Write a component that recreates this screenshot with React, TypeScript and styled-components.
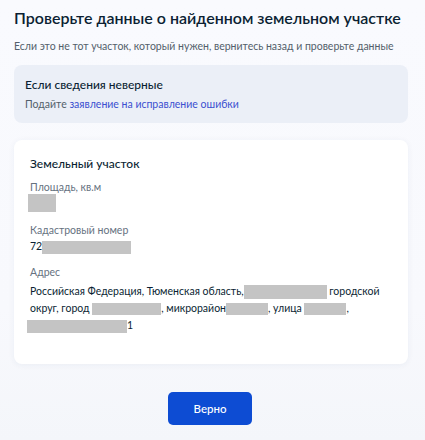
import React from "react";
import styled, { createGlobalStyle } from "styled-components";

const Global = createGlobalStyle`
  html, body { margin: 0; padding: 0; }
  body {
    background: linear-gradient(180deg, #f9fafe 0%, #f8f9fd 70%, #f4f6fa 100%);
    min-height: 440px;
    font-family: Lato, "Open Sans", sans-serif;
    color: #0b1f33;
  }
`;

const Page = styled.div`
  padding: 6px 17px 0 14px;
  display: flex;
  flex-direction: column;
`;

const Title = styled.h1`
  margin: 0;
  font-size: 16px;
  line-height: 24px;
  font-weight: 600;
  color: #0b1f33;
  white-space: nowrap;
`;

const Subtitle = styled.p`
  margin: 8px 0 0;
  font-size: 10.5px;
  line-height: 16px;
  color: #535f6b;
`;

const Alert = styled.div`
  margin-top: 11px;
  background: #ebeff7;
  border-radius: 8px;
  padding: 12px 11px 11px;
  display: flex;
  flex-direction: column;
  gap: 3px;
`;

const AlertTitle = styled.div`
  font-size: 12px;
  line-height: 16px;
  font-weight: 500;
  color: #0b1f33;
`;

const AlertText = styled.div`
  font-size: 10.5px;
  line-height: 16px;
  color: #535f6b;
`;

const Link = styled.a`
  color: #3b4fd0;
  text-decoration: none;
`;

const Card = styled.div`
  margin-top: 17px;
  background: #fff;
  border-radius: 8px;
  box-shadow: 0 1px 6px rgba(40, 60, 120, 0.06);
  padding: 16px 16px 30px 16px;
  display: flex;
  flex-direction: column;
`;

const CardTitle = styled.div`
  font-size: 12px;
  line-height: 16px;
  font-weight: 500;
  color: #0b1f33;
  margin-bottom: 8px;
`;

const Field = styled.div<{ $gap?: number }>`
  display: flex;
  flex-direction: column;
  gap: ${(p) => p.$gap ?? 0}px;
  & + & {
    margin-top: 11px;
  }
`;

const Label = styled.div`
  font-size: 10.5px;
  line-height: 14px;
  color: #66727f;
`;

const Value = styled.div<{ $lh?: number }>`
  font-size: 10.5px;
  line-height: ${(p) => p.$lh ?? 16}px;
  color: #0b1f33;
`;

const Redacted = styled.span<{ $w: number; $h?: number; $ml?: number }>`
  display: inline-block;
  width: ${(p) => p.$w}px;
  height: ${(p) => p.$h ?? 14}px;
  margin-left: ${(p) => p.$ml ?? 0}px;
  background: #c4c4c4;
  vertical-align: middle;
`;

const BlockRedacted = styled.div<{ $w: number; $h: number; $ml?: number }>`
  width: ${(p) => p.$w}px;
  height: ${(p) => p.$h}px;
  margin-left: ${(p) => p.$ml ?? 0}px;
  background: #c4c4c4;
`;

const ButtonRow = styled.div`
  display: flex;
  justify-content: center;
  margin-top: 28px;
  padding-right: 2px;
`;

const Button = styled.button`
  width: 84px;
  height: 33px;
  border: none;
  border-radius: 5px;
  background: #0d4cd3;
  color: #fff;
  font-family: Lato, "Open Sans", sans-serif;
  font-size: 11.5px;
  font-weight: 500;
  cursor: pointer;
`;

export default function App() {
  return (
    <>
      <Global />
      <Page>
        <Title>Проверьте данные о найденном земельном участке</Title>
        <Subtitle>
          Если это не тот участок, который нужен, вернитесь назад и проверьте данные
        </Subtitle>
        <Alert>
          <AlertTitle>Если сведения неверные</AlertTitle>
          <AlertText>
            Подайте <Link href="#">заявление на исправление ошибки</Link>
          </AlertText>
        </Alert>
        <Card>
          <CardTitle>Земельный участок</CardTitle>
          <Field>
            <Label>Площадь, кв.м</Label>
            <BlockRedacted $w={28} $h={18} $ml={-2} />
          </Field>
          <Field $gap={1}>
            <Label>Кадастровый номер</Label>
            <Value>
              72<Redacted $w={89} $h={13} />
            </Value>
          </Field>
          <Field $gap={4}>
            <Label>Адрес</Label>
            <Value $lh={17}>
              Российская Федерация, Тюменская область,
              <Redacted $w={83} /> городской округ, город <Redacted $w={69} $h={12} />, микрорайон
              <Redacted $w={42} $h={12} />, улица <Redacted $w={42} $h={12} />,{" "}
              <Redacted $w={100} $h={13} $ml={-3} />1
            </Value>
          </Field>
        </Card>
        <ButtonRow>
          <Button>Верно</Button>
        </ButtonRow>
      </Page>
    </>
  );
}
